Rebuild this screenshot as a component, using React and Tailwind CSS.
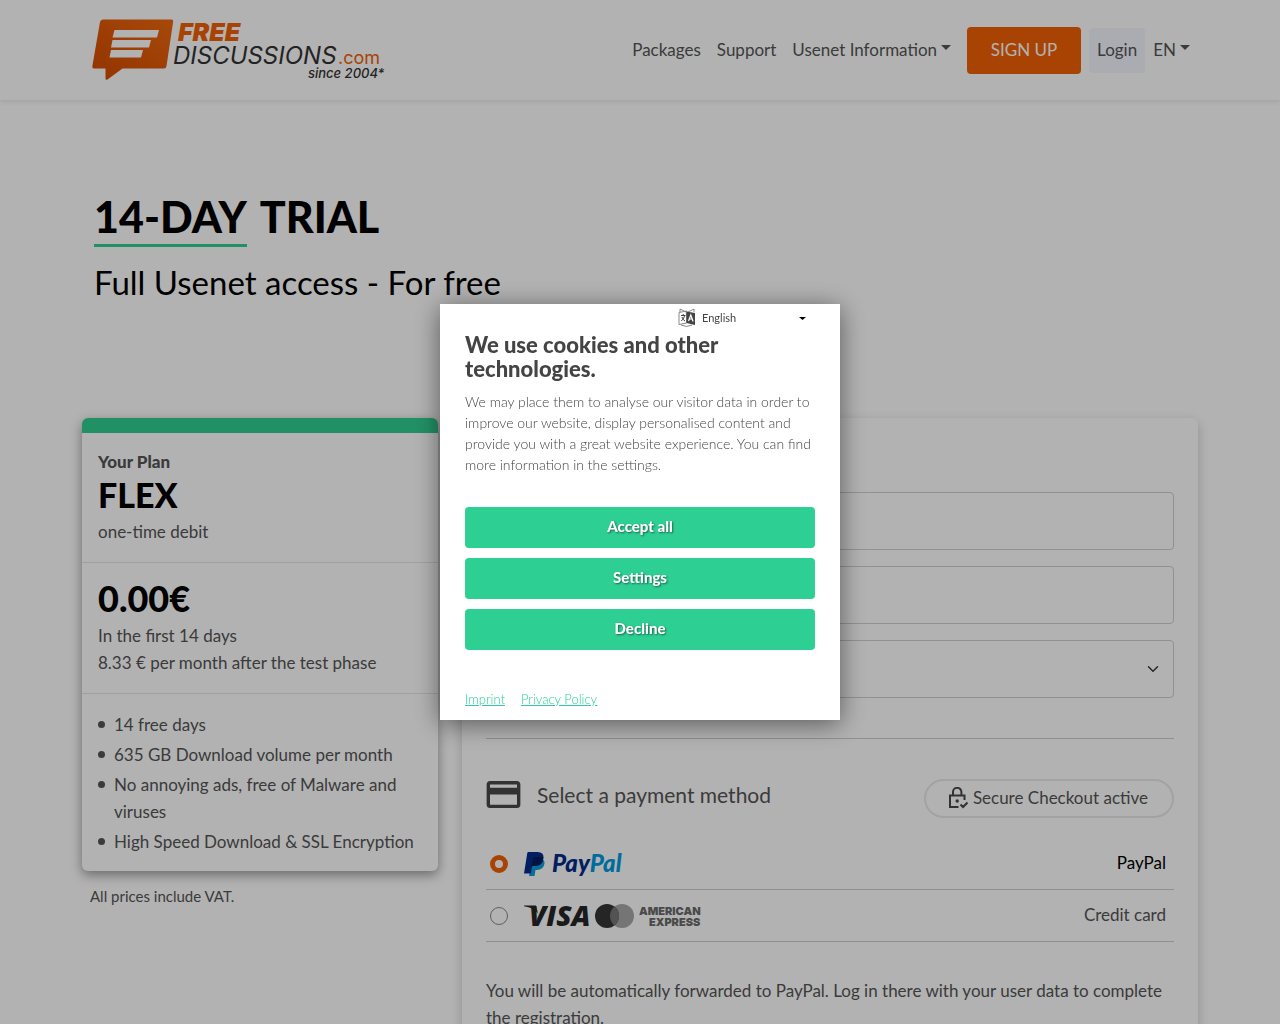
import React from 'react';

const planFeatures = [
  '14 free days',
  '635 GB Download volume per month',
  'No annoying ads, free of Malware and viruses',
  'High Speed Download & SSL Encryption',
];

function Caret() {
  return (
    <svg className="mb-1" width="10" height="5" viewBox="0 0 10 5" fill="currentColor" aria-hidden="true">
      <path d="M0 0h10L5 5z" />
    </svg>
  );
}

function Logo() {
  return (
    <svg width="300" height="66" viewBox="0 0 300 66" role="img" aria-label="Free Discussions">
      <defs>
        <linearGradient id="bubble" x1="0" y1="1" x2="1" y2="0">
          <stop offset="0" stopColor="#d34a00" />
          <stop offset="1" stopColor="#f0690f" />
        </linearGradient>
      </defs>
      <path
        d="M12 2.500h68.500q2 0 1.700 2L75.500 49q-.400 2.500-2.500 2.500H31.500L16.500 62.500q-2 1-2-1V51.500H3q-2 0-1.700-2L9 5q.500-2.500 3-2.500z"
        fill="url(#bubble)"
      />
      <path d="M23.500 13H68l-2 7.500H21.500zM21.500 23H60l-2 7.500H20zM20 33H52l-2 7.500H18.500z" fill="#fff" />
      <text x="87" y="24" fontFamily="Inter" fontSize="25" fontWeight="900" fontStyle="italic" fill="#f16107">
        FREE
      </text>
      <text x="82" y="47" fontFamily="Inter" fontSize="24" fontWeight="400" fontStyle="italic" fill="#333">
        DISCUSSIONS
      </text>
      <text x="247" y="47" fontFamily="Inter" fontSize="18" fill="#f16107">
        .com
      </text>
      <text x="217" y="61" fontFamily="Inter" fontSize="13" fontWeight="500" fontStyle="italic" fill="#333">
        since 2004*
      </text>
    </svg>
  );
}

function Header() {
  return (
    <header className="h-[100px] bg-white shadow-[0_2px_4px_rgba(0,0,0,0.08)]">
      <div className="mx-auto flex h-full max-w-[1140px] items-center justify-between px-5">
        <a href="#home" className="pl-px">
          <Logo />
        </a>
        <nav className="flex items-center text-[17px] text-[#555]">
          <a href="#packages" className="px-2 pb-0.5">Packages</a>
          <a href="#support" className="px-2 pb-0.5">Support</a>
          <button type="button" className="flex items-center gap-1 px-2 pb-0.5">
            Usenet Information <Caret />
          </button>
          <a
            href="#signup"
            className="mx-2 flex h-[47px] w-[114px] items-center justify-center rounded bg-[#f16107] pb-px text-white"
          >
            SIGN UP
          </a>
          <a href="#login" className="flex h-[45px] items-center rounded bg-[#f4f6ff] px-2 pb-0.5">Login</a>
          <button type="button" className="flex items-center gap-1 pb-0.5 pl-2">
            EN <Caret />
          </button>
        </nav>
      </div>
    </header>
  );
}

function PlanCard() {
  return (
    <aside className="w-[356px] shrink-0">
      <div className="overflow-hidden rounded-md bg-white shadow-[0_4px_12px_rgba(0,0,0,0.4)]">
        <div className="h-[15px] bg-[#31cf91]" />
        <section className="h-[130px] border-b border-[#e6e6e6] px-4 pt-[15px]">
          <p className="font-black">Your Plan</p>
          <h2 className="text-[34px] leading-10 font-black text-black">FLEX</h2>
          <p className="mt-[3px]">one-time debit</p>
        </section>
        <section className="h-[131px] border-b border-[#e6e6e6] px-4 pt-[15px]">
          <h3 className="text-[36px] leading-10 font-black text-black">0.00€</h3>
          <p className="mt-1">In the first 14 days</p>
          <p>8.33 € per month after the test phase</p>
        </section>
        <ul className="flex flex-col gap-[3px] px-4 pt-[17px] pb-4">
          {planFeatures.map((feature) => (
            <li key={feature} className="flex">
              <span className="mt-[10px] mr-[9px] size-[7px] shrink-0 rounded-full bg-[#555]" />
              {feature}
            </li>
          ))}
        </ul>
      </div>
      <p className="mt-[13px] px-2 text-[15px] leading-6">All prices include VAT.</p>
    </aside>
  );
}

function PayPalLogo() {
  return (
    <svg className="overflow-visible" width="100" height="26" viewBox="0 0 100 26" role="img" aria-label="PayPal">
      <path d="M8.500 7H16q5 1 4.500 5.500-1 6.500-7.500 6.500h-1.500L10.500 25H5z" fill="#0aa0dc" />
      <path d="M4.500 1h9q6.500 0 6 6-1 8-8.500 8H8.300L6.800 22.500H0L3.300 2q.200-1 1.200-1z" fill="#002c8a" />
      <path d="M9 7q.200-1 1.200-1h9q.500 8.500-8.200 9H7.700z" fill="#001c64" />
      <text x="28" y="21" fontFamily="Lato" fontSize="24" fontWeight="900" fontStyle="italic" fill="#002c8a">
        Pay<tspan fill="#009be1">Pal</tspan>
      </text>
    </svg>
  );
}

function CardLogos() {
  return (
    <svg
      className="overflow-visible"
      width="182"
      height="26"
      viewBox="0 1 182 26"
      role="img"
      aria-label="Visa, Mastercard, American Express"
    >
      <path d="M0 3.500h12l2 8Q10 5.500 0 4.200z" fill="#262626" />
      <text x="5" y="24" fontFamily="Open Sans" fontSize="28" fontWeight="800" fontStyle="italic" fill="#262626">
        VISA
      </text>
      <circle cx="98" cy="14" r="12" fill="#a8a8a8" />
      <circle cx="83" cy="14" r="12" fill="#363636" />
      <path d="M90.500 4.600a12 12 0 0 1 0 18.800 12 12 0 0 1 0-18.800z" fill="#777" />
      <g fontFamily="Inter" fontSize="11" fontWeight="900" fill="#6a6a6a">
        <text x="115" y="13">AMERICAN</text>
        <text x="125" y="24">EXPRESS</text>
      </g>
    </svg>
  );
}

function PaymentOption({ id, label, logo, checked }) {
  return (
    <label htmlFor={id} className="flex h-[52px] items-center border-b border-[#cfcfd2] pr-2 pl-1">
      <input
        id={id}
        type="radio"
        name="payment"
        defaultChecked={checked}
        className="mr-4 size-[18px] appearance-none rounded-full border border-[#888] checked:border-5 checked:border-[#f16107]"
      />
      {logo}
      <span className={`ml-auto pb-[3px] ${checked ? 'text-black' : ''}`}>{label}</span>
    </label>
  );
}

function CheckoutCard() {
  const field = 'block h-[58px] w-full rounded border border-[#cfd0d8] bg-white px-3';

  return (
    <form className="min-w-0 flex-1 rounded-md bg-white px-6 pt-[74px] pb-10 shadow-[0_4px_12px_rgba(0,0,0,0.2)]">
      <div className="flex flex-col gap-4">
        <input type="email" aria-label="Email" className={field} />
        <input type="password" aria-label="Password" className={field} />
        <div className="relative">
          <select aria-label="Country" className={`${field} appearance-none`} />
          <svg
            className="pointer-events-none absolute top-[23px] right-[15px]"
            width="12"
            height="12"
            viewBox="0 0 16 16"
            fill="none"
            stroke="#343a40"
            strokeWidth="2"
            strokeLinecap="round"
            strokeLinejoin="round"
          >
            <path d="m2 5 6 6 6-6" />
          </svg>
        </div>
      </div>
      <hr className="mt-10 border-[#cfcfd2]" />

      <div className="mt-10 flex items-start">
        <svg className="mt-0.5" width="35" height="27" viewBox="2 4 20 16" fill="#484848" aria-hidden="true">
          <path d="M20 4H4c-1.110 0-1.990.890-1.990 2L2 18c0 1.110.890 2 2 2h16c1.110 0 2-.890 2-2V6c0-1.110-.890-2-2-2zm0 14H4v-6h16v6zm0-10H4V6h16v2z" />
        </svg>
        <h2 className="ml-4 text-[21px] leading-8">Select a payment method</h2>
        <div className="ml-auto flex h-[39px] items-center rounded-full border-2 border-[#e9e9e9] pr-6 pb-0.5 pl-[22px]">
          <svg
            className="mr-[5px]"
            width="20"
            height="22"
            viewBox="0 0 20 22"
            fill="none"
            stroke="#484848"
            strokeWidth="2"
            aria-hidden="true"
          >
            <path d="M10.500 20H2V8.500h14.500V13M5 8.500V5a4.200 4.200 0 0 1 8.400 0v3.500M12.500 17.500l2.500 2.500 4.500-4.500" />
            <circle cx="9.200" cy="14" r="1.700" fill="#484848" stroke="none" />
          </svg>
          Secure Checkout active
        </div>
      </div>

      <div className="mt-5">
        <PaymentOption id="paypal" label="PayPal" logo={<PayPalLogo />} checked />
        <PaymentOption id="card" label="Credit card" logo={<CardLogos />} />
      </div>
      <p className="mt-[35px]">
        You will be automatically forwarded to PayPal. Log in there with your user data to complete the
        registration.
      </p>
    </form>
  );
}

function CookieDialog() {
  const button =
    'h-[41px] rounded bg-[#2dcf93] pb-[3px] text-[15px] font-black text-white [text-shadow:1px_1px_2px_rgba(0,0,0,0.5)]';

  return (
    <div className="fixed inset-0 flex items-center justify-center bg-black/30">
      <div
        role="dialog"
        aria-labelledby="cookie-title"
        className="flex h-[416px] w-[400px] flex-col bg-white px-[25px] text-[#444] shadow-[0_4px_24px_rgba(0,0,0,0.5)]"
      >
        <div className="flex h-[26px] items-center justify-end pr-[9px]">
          <svg width="18" height="19" viewBox="0 0 18 19" aria-hidden="true">
            <path d="M2 1v3M2 1l7 3.500 7-3.500v3M1 4.500l7.500-1.500v12L1 16.500zM3 17q5.500 3 11 0" fill="none" stroke="#888" />
            <path d="M3 7.500h4.500M5.200 6v1.500M3.200 13Q6 11 6.500 8M4 9q1 3 3 4" fill="none" stroke="#444" />
            <path d="M8.500 3.500 17 5v12l-8.500-2z" fill="#444" />
            <path d="m10.500 13 2.300-6 2.300 6.500M11.500 11h2.800" fill="none" stroke="#fff" strokeWidth="1.200" />
          </svg>
          <div className="relative ml-1.5">
            <select aria-label="Language" className="block w-[104px] appearance-none text-[11px]">
              <option>English</option>
            </select>
            <svg className="pointer-events-none absolute top-1/2 right-0" width="7" height="3" viewBox="0 0 7 3">
              <path d="M0 0h7L3.500 3z" />
            </svg>
          </div>
        </div>
        <h2 id="cookie-title" className="mt-[3px] text-[22px] leading-6 font-black">
          We use cookies and other technologies.
        </h2>
        <p className="mt-[10px] text-[14px] leading-[21px] font-light">
          We may place them to analyse our visitor data in order to improve our website, display personalised
          content and provide you with a great website experience. You can find more information in the settings.
        </p>
        <div className="mt-8 flex flex-col gap-[10px]">
          <button type="button" className={button}>Accept all</button>
          <button type="button" className={button}>Settings</button>
          <button type="button" className={button}>Decline</button>
        </div>
        <div className="mt-auto flex gap-4 pb-[11px] text-[13px] leading-5 font-light text-[#2dcf93] underline">
          <a href="#imprint">Imprint</a>
          <a href="#privacy">Privacy Policy</a>
        </div>
      </div>
    </div>
  );
}

export default function App() {
  return (
    <div className="h-screen overflow-hidden bg-white font-['Lato',sans-serif] text-[17px] leading-[27px] text-[#555]">
      <Header />
      <main className="mx-auto max-w-[1140px] px-3">
        <div className="h-[318px] px-3 pt-[90px] text-black">
          <h1 className="text-[43px] leading-[54px] font-black">
            <span className="mr-1 inline-block border-b-3 border-[#31cf91]">14-DAY</span> TRIAL
          </h1>
          <p className="mt-3 text-[33px] leading-[46px]">Full Usenet access - For free</p>
        </div>
        <div className="flex items-start gap-6">
          <PlanCard />
          <CheckoutCard />
        </div>
      </main>
      <CookieDialog />
    </div>
  );
}
